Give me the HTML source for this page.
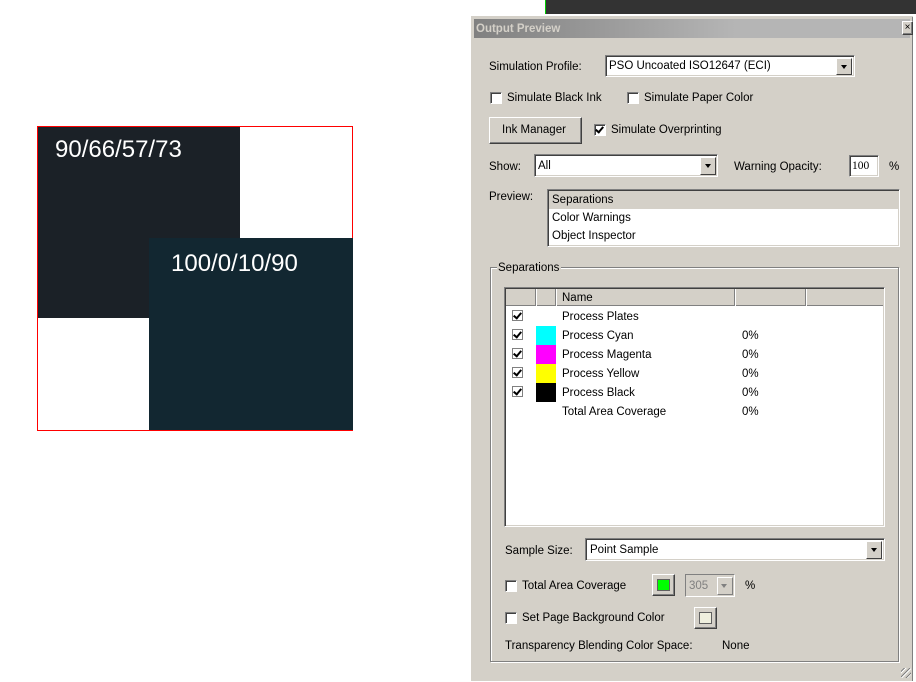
<!DOCTYPE html>
<html><head><meta charset="utf-8"><style>
*{margin:0;padding:0;box-sizing:border-box}
body{width:916px;height:682px;background:#fff;position:relative;overflow:hidden;font-family:"Liberation Sans",Tahoma,sans-serif;font-size:11.5px;color:#000}
.a{position:absolute}
.t{position:absolute;white-space:nowrap;line-height:14px}
.sunk{border:1px solid;border-color:#808080 #fff #fff #808080;box-shadow:inset 1px 1px 0 #404040,inset -1px -1px 0 #d4d0c8;background:#fff}
.btn{background:#d4d0c8;border:1px solid;border-color:#fff #404040 #404040 #fff;box-shadow:inset -1px -1px 0 #808080}
.cb{position:absolute;width:12px;height:12px;background:#fff;border:1px solid;border-color:#808080 #fff #fff #808080;box-shadow:inset 1px 1px 0 #404040}
.ck::after{content:"";position:absolute;left:2px;top:0px;width:3px;height:6px;border:solid #000;border-width:0 2px 2px 0;transform:rotate(40deg)}
.dd{position:absolute;width:16px;background:#d4d0c8;border:1px solid;border-color:#fff #404040 #404040 #fff}
.dd::after{content:"";position:absolute;left:4px;top:6px;border:3.5px solid transparent;border-top:4px solid #000}
</style></head><body>
<!-- artwork -->
<div class="a" style="left:37px;top:126px;width:316px;height:305px;border:1px solid #f00"></div>
<div class="a" style="left:38px;top:127px;width:202px;height:191px;background:#1b2127"></div>
<div class="a" style="left:149px;top:238px;width:204px;height:192px;background:#122731"></div>
<div class="t" style="left:55px;top:137px;color:#fff;font-size:24px;line-height:26px">90/66/57/73</div>
<div class="t" style="left:171px;top:251px;color:#fff;font-size:24px;line-height:26px">100/0/10/90</div>
<!-- dark bar -->
<div class="a" style="left:545px;top:0;width:371px;height:14px;background:#333;border-left:1px solid #0c0"></div>
<!-- dialog -->
<div class="a" style="left:470px;top:15px;width:444px;height:667px;background:#d4d0c8;border:1px solid #fff;box-shadow:inset 1px 1px 0 #d4d0c8,inset -1px 0 0 #808080"></div>
<div class="a" style="left:474px;top:19px;width:436px;height:19px;background:linear-gradient(90deg,#808080,#b5b5b5 60%,#b5b5b5)"></div>
<div class="t" style="left:476px;top:22px;color:#d4d0c8;font-weight:bold">Output Preview</div>
<div class="a btn" style="left:902px;top:21px;width:11px;height:14px;font-size:10px;line-height:11px;text-align:center">×</div>

<div class="t" style="left:489px;top:60px">Simulation Profile:</div>
<div class="a sunk" style="left:605px;top:55px;width:250px;height:22px"></div>
<div class="t" style="left:609px;top:59px">PSO Uncoated ISO12647 (ECI)</div>
<div class="dd" style="left:836px;top:58px;height:17px"></div>

<div class="cb" style="left:490px;top:92px"></div><div class="t" style="left:507px;top:91px">Simulate Black Ink</div>
<div class="cb" style="left:627px;top:92px"></div><div class="t" style="left:644px;top:91px">Simulate Paper Color</div>

<div class="a btn" style="left:489px;top:117px;width:93px;height:27px"></div>
<div class="t" style="left:502px;top:123px">Ink Manager</div>
<div class="cb ck" style="left:594px;top:124px"></div><div class="t" style="left:611px;top:123px">Simulate Overprinting</div>

<div class="t" style="left:489px;top:160px">Show:</div>
<div class="a sunk" style="left:534px;top:154px;width:184px;height:23px"></div>
<div class="t" style="left:538px;top:159px">All</div>
<div class="dd" style="left:700px;top:157px;height:18px"></div>
<div class="t" style="left:734px;top:160px">Warning Opacity:</div>
<div class="a sunk" style="left:849px;top:155px;width:30px;height:22px"></div>
<div class="t" style="left:852px;top:159px;font-family:'Liberation Serif',serif">100</div>
<div class="t" style="left:889px;top:160px">%</div>

<div class="t" style="left:489px;top:190px">Preview:</div>
<div class="a sunk" style="left:547px;top:189px;width:353px;height:58px"></div>
<div class="a" style="left:549px;top:191px;width:349px;height:18px;background:#d4d0c8"></div>
<div class="t" style="left:552px;top:193px">Separations</div>
<div class="t" style="left:552px;top:211px">Color Warnings</div>
<div class="t" style="left:552px;top:229px">Object Inspector</div>

<!-- separations group -->
<div class="a" style="left:490px;top:267px;width:409px;height:395px;border:1px solid #808080;box-shadow:1px 1px 0 #fff,inset 1px 1px 0 #fff"></div>
<div class="t" style="left:497px;top:261px;background:#d4d0c8;padding:0 2px 0 1px">Separations</div>
<div class="a sunk" style="left:504px;top:287px;width:381px;height:240px"></div>
<div class="a" style="left:506px;top:289px;width:377px;height:17px;background:#d4d0c8;border-bottom:1px solid #808080"></div>
<div class="a" style="left:535px;top:289px;width:1px;height:17px;background:#808080;box-shadow:1px 0 0 #fff"></div>
<div class="a" style="left:555px;top:289px;width:1px;height:17px;background:#808080;box-shadow:1px 0 0 #fff"></div>
<div class="a" style="left:734px;top:289px;width:1px;height:17px;background:#808080;box-shadow:1px 0 0 #fff"></div>
<div class="a" style="left:805px;top:289px;width:1px;height:17px;background:#808080;box-shadow:1px 0 0 #fff"></div>
<div class="t" style="left:562px;top:291px">Name</div>

<div class="cb ck" style="left:512px;top:310px;width:11px;height:11px;border-color:#808080;box-shadow:none"></div>
<div class="cb ck" style="left:512px;top:329px;width:11px;height:11px;border-color:#808080;box-shadow:none"></div>
<div class="cb ck" style="left:512px;top:348px;width:11px;height:11px;border-color:#808080;box-shadow:none"></div>
<div class="cb ck" style="left:512px;top:367px;width:11px;height:11px;border-color:#808080;box-shadow:none"></div>
<div class="cb ck" style="left:512px;top:386px;width:11px;height:11px;border-color:#808080;box-shadow:none"></div>
<div class="a" style="left:536px;top:326px;width:20px;height:19px;background:#0ff"></div>
<div class="a" style="left:536px;top:345px;width:20px;height:19px;background:#f0f"></div>
<div class="a" style="left:536px;top:364px;width:20px;height:19px;background:#ff0"></div>
<div class="a" style="left:536px;top:383px;width:20px;height:19px;background:#000"></div>
<div class="t" style="left:562px;top:310px">Process Plates</div>
<div class="t" style="left:562px;top:329px">Process Cyan</div>
<div class="t" style="left:562px;top:348px">Process Magenta</div>
<div class="t" style="left:562px;top:367px">Process Yellow</div>
<div class="t" style="left:562px;top:386px">Process Black</div>
<div class="t" style="left:562px;top:405px">Total Area Coverage</div>
<div class="t" style="left:742px;top:329px">0%</div>
<div class="t" style="left:742px;top:348px">0%</div>
<div class="t" style="left:742px;top:367px">0%</div>
<div class="t" style="left:742px;top:386px">0%</div>
<div class="t" style="left:742px;top:405px">0%</div>

<div class="t" style="left:505px;top:544px">Sample Size:</div>
<div class="a sunk" style="left:585px;top:538px;width:300px;height:23px"></div>
<div class="t" style="left:590px;top:543px">Point Sample</div>
<div class="dd" style="left:866px;top:541px;height:18px"></div>

<div class="cb" style="left:505px;top:580px"></div><div class="t" style="left:522px;top:579px">Total Area Coverage</div>
<div class="a btn" style="left:652px;top:574px;width:23px;height:22px"></div>
<div class="a" style="left:657px;top:579px;width:13px;height:12px;background:#0f0;border:1px solid #606060"></div>
<div class="a" style="left:685px;top:574px;width:50px;height:23px;border:1px solid;border-color:#808080 #fff #fff #808080;background:#d4d0c8"></div>
<div class="t" style="left:689px;top:579px;color:#808080">305</div>
<div class="a" style="left:717px;top:577px;width:16px;height:18px;background:#d4d0c8;border:1px solid;border-color:#fff #808080 #808080 #fff"></div>
<div class="a" style="left:721px;top:584px;border:3.5px solid transparent;border-top:4px solid #808080"></div>
<div class="t" style="left:745px;top:579px">%</div>

<div class="cb" style="left:505px;top:612px"></div><div class="t" style="left:522px;top:611px">Set Page Background Color</div>
<div class="a btn" style="left:694px;top:607px;width:23px;height:22px"></div>
<div class="a" style="left:699px;top:612px;width:13px;height:12px;background:#efefde;border:1px solid #606060"></div>

<div class="t" style="left:505px;top:639px">Transparency Blending Color Space:</div>
<div class="t" style="left:722px;top:639px">None</div>
<div class="a" style="left:901px;top:668px;width:10px;height:10px;background:repeating-linear-gradient(135deg,transparent 0 2px,#808080 2px 3px,#fff 3px 4px)"></div>
</body></html>
